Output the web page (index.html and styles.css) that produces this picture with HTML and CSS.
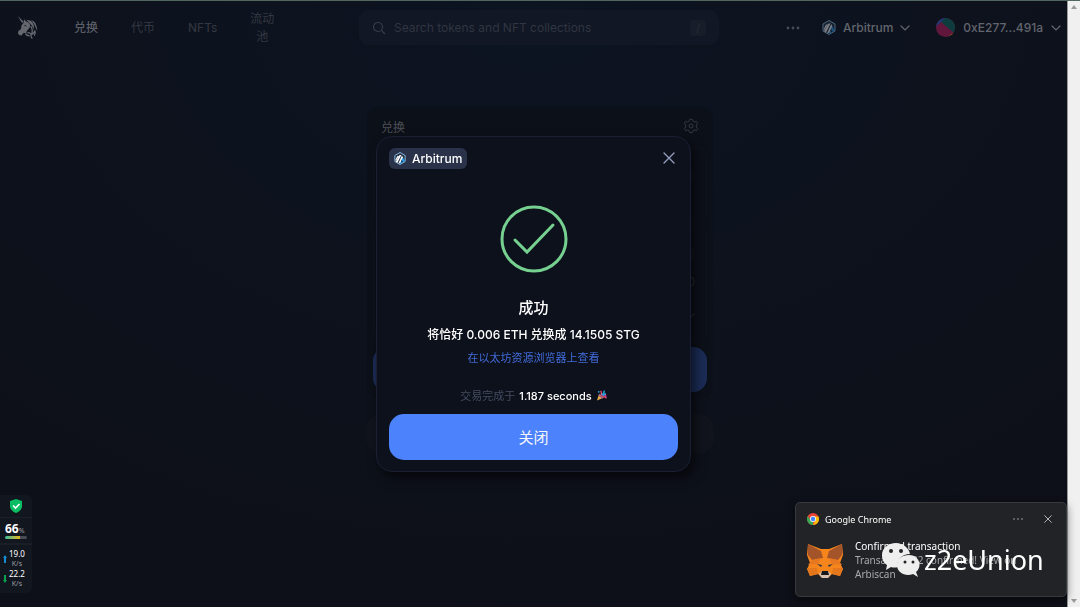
FILE: index.html
```html
<!DOCTYPE html>
<html lang="zh-CN">
<head>
  <meta charset="UTF-8" />
  <meta name="viewport" content="width=device-width, initial-scale=1.0"/>
  <title>Uniswap</title>
  <link rel="stylesheet" href="styles.css">
</head>
<body>

  <!-- shared icons -->
  <svg class="sprite" aria-hidden="true">
    <symbol id="arbitrum" viewBox="0 0 28 30">
      <path d="M14 1 L26 8 V22 L14 29 L2 22 V8 Z" fill="#213147" stroke="#9dcced" stroke-width="2"/>
      <path d="M17 16 L19.500 11 L25 20 V22 L21.500 24 Z M15 19 L12.500 24 L14.500 27 L19 25.500 Z" fill="#28a0f0"/>
      <path d="M13 7 H17 L8 25 L4 22.500 Z" fill="#fff"/>
      <path d="M18.500 8 L20.500 12 L14 26 L10.500 26 Z" fill="#fff"/>
      <path d="M8 9 H12 L4 21 V17 Z" fill="#fff"/>
    </symbol>
    <symbol id="chevron" viewBox="0 0 10 6">
      <path d="M1 1 L5 5 L9 1" fill="none" stroke="currentColor" stroke-width="1.200" stroke-linecap="round"/>
    </symbol>
    <symbol id="close" viewBox="0 0 12 12">
      <path d="M1 1 L11 11 M11 1 L1 11" fill="none" stroke="currentColor" stroke-width="1.300" stroke-linecap="round"/>
    </symbol>
  </svg>

  <div class="app">
    <header>
      <nav>
        <a href="#" class="logo" aria-label="Uniswap">
          <svg viewBox="0 0 66 76" width="22" height="25">
            <path d="M2 3 L19 20 L15 24 Z" fill="currentColor"/>
            <path d="M19 24 L21 13 L27 20 Q36 21 39 29 Q41 37 34 43 Q27 48 28 56 L20 54 L13 62 Q6 63 3 57 L3 50 L12 42 L13 32 Z" fill="currentColor"/>
            <path d="M28 15 Q42 14 48 25 Q53 33 51 44 Q46 31 37 24 Q33 19 28 15 Z" fill="currentColor"/>
            <path d="M43 16 Q56 20 58 32 Q61 37 61 48 Q55 36 52 29 Q48 21 43 16 Z" fill="currentColor"/>
            <path d="M41 34 Q49 45 44 59 Q51 56 54 49 Q57 55 52 63 M31 55 Q39 51 42 59 Q41 66 46 72 M25 58 Q31 64 38 63" fill="none" stroke="currentColor" stroke-width="4"/>
            <path d="M22 33 Q26 30 28 34" fill="none" stroke="#10131f" stroke-width="3"/>
          </svg>
        </a>
        <a href="#" class="active">兑换</a>
        <a href="#">代币</a>
        <a href="#">NFTs</a>
        <a href="#" class="pool">流动池</a>
      </nav>

      <div class="search-box">
        <svg viewBox="0 0 14 14" width="14" height="14"><circle cx="6" cy="6" r="4.500"/><path d="M9.500 9.500 L13 13"/></svg>
        <input type="text" aria-label="Search" placeholder="Search tokens and NFT collections">
        <kbd>/</kbd>
      </div>

      <div class="account">
        <button class="more" aria-label="More">
          <svg viewBox="0 0 14 4" width="14" height="4"><circle cx="2" cy="2" r="1.400"/><circle cx="7" cy="2" r="1.400"/><circle cx="12" cy="2" r="1.400"/></svg>
        </button>
        <button>
          <svg width="14" height="15"><use href="#arbitrum"/></svg>
          Arbitrum
          <svg width="10" height="6"><use href="#chevron"/></svg>
        </button>
        <button class="wallet">
          <svg viewBox="0 0 18 18" width="19" height="19">
            <clipPath id="round"><circle cx="9" cy="9" r="9"/></clipPath>
            <g clip-path="url(#round)">
              <rect width="18" height="18" fill="#c71f63"/>
              <path d="M8 0 L4 3 L18 15 V0 Z" fill="#0b7068"/>
              <path d="M0 0 H9 L0 8 Z" fill="#3265d6"/>
              <path d="M11 18 L16 14 L18 18 Z" fill="#f3a21b"/>
            </g>
          </svg>
          0xE277...491a
          <svg width="10" height="6"><use href="#chevron"/></svg>
        </button>
      </div>
    </header>

    <main>
      <div class="swap">
        <div class="swap-title">
          <span>兑换</span>
          <svg class="gear" viewBox="0 0 24 24" width="16" height="16">
            <circle cx="12" cy="12" r="3"/>
            <path d="M10 2 H14 L15 5 L17 6 L20 5 L22 8 L20 10.500 V13.500 L22 16 L20 19 L17 18 L15 19 L14 22 H10 L9 19 L7 18 L4 19 L2 16 L4 13.500 V10.500 L2 8 L4 5 L7 6 L9 5 Z"/>
          </svg>
        </div>
        <div class="panel"><span class="token"></span></div>
        <div class="panel tall">
          <span class="token"></span>
          <span>0</span>
          <svg width="10" height="6"><use href="#chevron"/></svg>
        </div>
        <div class="swap-button"></div>
      </div>
      <div class="promo"></div>
    </main>
  </div>

  <div class="scrollbar">
    <svg viewBox="0 0 6 4" width="6" height="4"><path d="M3 0 L6 4 H0 Z"/></svg>
    <svg viewBox="0 0 6 4" width="6" height="4"><path d="M0 0 H6 L3 4 Z"/></svg>
  </div>

  <div class="overlay">
    <div class="modal" role="dialog" aria-label="成功">
      <div class="modal-top">
        <span class="chain"><svg width="12" height="13"><use href="#arbitrum"/></svg>Arbitrum</span>
        <button class="close" aria-label="Close"><svg width="12" height="12"><use href="#close"/></svg></button>
      </div>
      <svg class="check" viewBox="0 0 68 68" width="68" height="68">
        <circle cx="34" cy="34" r="32"/>
        <path d="M15 35 L27 47 L53 20"/>
      </svg>
      <h2>成功</h2>
      <p class="summary">将恰好 0.006 ETH 兑换成 14.1505 STG</p>
      <a href="#" class="explorer">在以太坊资源浏览器上查看</a>
      <p class="time">交易完成于 <b>1.187 seconds</b>
        <svg viewBox="0 0 24 24" width="11" height="11">
          <path d="M7 8 L16 17 L2 23 Z" fill="#e9ad4c"/>
          <path d="M7 8 L16 17 L13 19 L5 12 Z" fill="#985f88"/>
          <path d="M10 12 Q14 8 10 2 M13 14 Q15 9 22 10 M15 16 Q19 13 23 18" fill="none" stroke="#f04769" stroke-width="3"/>
          <path d="M12 10 Q18 8 18 1 M15 13 L21 7" fill="none" stroke="#20a8df" stroke-width="3"/>
          <circle cx="6" cy="4" r="2" fill="#20a8df"/><circle cx="21" cy="13" r="2" fill="#ce45b4"/>
        </svg>
      </p>
      <button class="done">关闭</button>
    </div>
  </div>

  <aside class="monitor">
    <div class="shield">
      <svg viewBox="0 0 12 14" width="12" height="14">
        <path d="M6 0 L12 2 V8 Q11 12 6 14 Q1 12 0 8 V2 Z" fill="#08bd62"/>
        <path d="M3 6.500 L5.500 9 L9.500 5" fill="none" stroke="#fff" stroke-width="1.600"/>
      </svg>
    </div>
    <div class="memory"><b>66</b><small>%</small><div class="meter"></div></div>
    <div class="speed">
      <svg viewBox="0 0 4 8" width="4" height="8"><path d="M2 0 L4 3 H3 V8 H1 V3 H0 Z" fill="#168bd2"/></svg>
      <div>19.0<small>K/s</small></div>
    </div>
    <div class="speed">
      <svg viewBox="0 0 4 8" width="4" height="8"><path d="M2 8 L4 5 H3 V0 H1 V5 H0 Z" fill="#0aa24e"/></svg>
      <div>22.2<small>K/s</small></div>
    </div>
  </aside>

  <section class="toast">
    <div class="toast-top">
      <svg viewBox="0 0 24 24" width="12" height="12">
        <circle cx="12" cy="12" r="12" fill="#ea4335"/>
        <path d="M1.600 6 L7 15 L12 17 L12 24 A12 12 0 0 1 1.600 6" fill="#34a853"/>
        <path d="M12 7 H22.900 A12 12 0 0 1 12 24 L17 15 Z" fill="#fbbc05"/>
        <circle cx="12" cy="12" r="6" fill="#fff"/><circle cx="12" cy="12" r="4.500" fill="#4285f4"/>
      </svg>
      <span>Google Chrome</span>
      <button aria-label="Options"><svg viewBox="0 0 10 2" width="10" height="2" fill="currentColor"><circle cx="1" cy="1" r=".7"/><circle cx="5" cy="1" r=".7"/><circle cx="9" cy="1" r=".7"/></svg></button>
      <button aria-label="Dismiss"><svg width="8" height="8"><use href="#close"/></svg></button>
    </div>
    <div class="toast-body">
      <svg viewBox="0 0 36 35" width="36" height="35">
        <path d="M1 1 L14 6 H22 L35 1 L36 12 L33 20 L36 26 L33 33 L25 31 L21 35 H15 L11 31 L3 33 L0 26 L3 20 L0 12 Z" fill="#f6851b"/>
        <path d="M1 1 L14 8 L16 15 L5 17 L1 12 Z M35 1 L22 8 L20 15 L31 17 L35 12 Z" fill="#a45429"/>
        <path d="M5 17 L14 15 L11 21 L1 22 Z M31 17 L22 15 L25 21 L35 22 Z" fill="#e87820"/>
        <path d="M0 25 H10 L11 31 L3 33 Z M36 25 H26 L25 31 L33 33 Z" fill="#e4761b"/>
        <path d="M10 21 L15 22 L14 24 Z M26 21 L21 22 L22 24 Z" fill="#293643"/>
        <path d="M12 31 L15 28 H21 L24 31 L21 35 H15 Z" fill="#d7c1b3"/>
        <path d="M15 28 H21 L22 32 H14 Z" fill="#17191b"/>
      </svg>
      <div>
        <strong>Confirmed transaction</strong>
        <p>Transaction 32 confirmed! View on Arbiscan</p>
      </div>
    </div>
    <div class="watermark">
      <svg viewBox="0 0 38 34" width="38" height="34">
        <path d="M14 0 C6 0 0 5 0 12 C0 17 2 20 5 22 L4 27 L9 24 Q12 25 16 24 C14 17 20 11 28 11 C27 5 21 0 14 0 Z" fill="#eee"/>
        <path d="M27 12 C20 12 15 16 15 22 C15 30 24 34 31 31 L36 34 L34 29 C41 23 37 12 27 12 Z" fill="#eee"/>
        <g fill="#222326"><circle cx="9" cy="8" r="2"/><circle cx="19" cy="8" r="2"/><circle cx="23" cy="19" r="1.500"/><circle cx="31" cy="19" r="1.500"/></g>
      </svg>
      <span>z2eUnion</span>
    </div>
  </section>

</body>
</html>
```
FILE: styles.css
```css
* {
  box-sizing: border-box;
}

body {
  display: flex;
  min-height: 100vh;
  margin: 0;
  border-top: 1px solid #50665f;
  background-color: #0d1018;
  color: #fff;
  font-family: Inter, "Noto Sans CJK SC", sans-serif;
  font-size: 12px;
}

a {
  color: inherit;
  text-decoration: none;
}

button {
  padding: 0;
  border: none;
  background: none;
  color: inherit;
  font: inherit;
  cursor: pointer;
}

h2, p {
  margin: 0;
}

svg {
  flex: none;
}

.sprite {
  position: absolute;
  width: 0;
  height: 0;
}

.app {
  flex: 1;
  padding-left: 13px;
  background: radial-gradient(ellipse 80% 100% at 50% 0, #0c1421 0%, #0d121d 50%, #0d1018 100%);
}

/* Top bar */
header {
  display: flex;
  align-items: center;
  height: 53px;
}

nav, .account {
  flex: 1;
  display: flex;
  align-items: center;
}

nav {
  gap: 33px;
  padding-left: 4px;
  color: #343842;
}

nav a {
  line-height: 18px;
}

nav .active {
  color: #5b5e66;
  font-weight: 500;
}

.logo {
  display: flex;
  margin-right: 2px;
  color: #65676f;
}

.pool {
  width: 24px;
  text-align: center;
}

.search-box {
  display: flex;
  align-items: center;
  gap: 8px;
  width: 360px;
  height: 35px;
  padding: 0 12px;
  border: 1px solid #131825;
  border-radius: 10px;
  background-color: #111724;
}

.search-box svg {
  fill: none;
  stroke: #363c48;
  stroke-width: 1.2;
}

.search-box input {
  flex: 1;
  min-width: 0;
  padding: 0;
  border: none;
  outline: none;
  background: none;
  color: #fff;
  font: inherit;
}

.search-box input::placeholder {
  color: #303541;
}

kbd {
  width: 16px;
  border-radius: 4px;
  background-color: #181d2a;
  color: #2b303c;
  font: 10px/16px Inter, sans-serif;
  text-align: center;
}

.account {
  justify-content: flex-end;
  gap: 26px;
  padding-right: 6px;
  color: #62656d;
  font-weight: 500;
}

.account button {
  display: flex;
  align-items: center;
  gap: 8px;
}

.account button:nth-child(2) {
  gap: 7px;
}

.account button > svg:first-child {
  opacity: 0.45;
}

.account .more > svg:first-child {
  margin-right: -4px;
  fill: currentColor;
  opacity: 0.7;
}

/* Swap form behind the dialog */
main {
  display: flex;
  flex-direction: column;
  align-items: center;
  gap: 16px;
  padding-top: 53px;
}

.swap {
  width: 346px;
  padding: 6px;
  border-radius: 12px;
  background-color: #0c1018;
}

.swap-title {
  display: flex;
  justify-content: space-between;
  align-items: center;
  height: 26px;
  margin-bottom: 8px;
  padding: 0 8px;
  color: #4c4e55;
}

.gear {
  fill: none;
  stroke: #343843;
  stroke-width: 1.5;
}

.panel {
  display: flex;
  flex-direction: column;
  align-items: flex-end;
  gap: 10px;
  height: 76px;
  margin-bottom: 2px;
  padding: 18px 11px;
  border: 1px solid #10141e;
  border-radius: 10px;
  color: #262a34;
}

.panel.tall {
  height: 118px;
  margin-bottom: 4px;
}

.panel svg {
  margin-top: 14px;
}

.token {
  flex: none;
  width: 70px;
  height: 20px;
  border-radius: 10px;
  background-color: #10141d;
}

.swap-button {
  height: 45px;
  border-radius: 14px;
  background-color: #1b2c56;
}

.promo {
  width: 348px;
  height: 40px;
  border-radius: 16px;
  background-color: #11141d;
}

.scrollbar {
  display: flex;
  flex-direction: column;
  justify-content: space-between;
  align-items: center;
  width: 13px;
  padding: 4px 0;
  border-left: 1px solid #999;
  background-color: #f0f0f0;
  fill: #999;
}

/* Transaction dialog */
.overlay {
  position: fixed;
  inset: 0 13px 0 0;
  display: grid;
  place-items: center;
}

.modal {
  display: flex;
  flex-direction: column;
  align-items: center;
  width: 315px;
  padding: 11px 12px;
  border: 1px solid #192033;
  border-radius: 16px;
  background-color: #0d111c;
  box-shadow: 4px 6px 12px rgba(0,0,0,0.6);
}

.modal-top {
  display: flex;
  justify-content: space-between;
  align-items: center;
  width: 100%;
  margin-bottom: 36px;
}

.chain {
  display: flex;
  align-items: center;
  gap: 6px;
  padding: 0 5px;
  border-radius: 6px;
  background-color: #293249;
  font-weight: 500;
  line-height: 21px;
}

.close {
  display: flex;
  padding: 3px;
  color: #98a1c0;
}

.check {
  margin-bottom: 24px;
  fill: none;
  stroke: #76d191;
  stroke-width: 3;
  stroke-linecap: round;
}

h2 {
  margin-bottom: 6px;
  font-size: 15px;
  font-weight: 500;
  line-height: 22px;
}

.summary {
  margin-bottom: 5px;
  font-weight: 500;
  line-height: 20px;
}

.explorer {
  margin-bottom: 22px;
  color: #426cdb;
  font-size: 11px;
  line-height: 16px;
}

.time {
  display: flex;
  align-items: center;
  gap: 4px;
  margin-bottom: 10px;
  color: #454c61;
  font-size: 11px;
  line-height: 16px;
}

.time b {
  color: #fff;
  font-weight: 500;
}

.done {
  width: 100%;
  height: 46px;
  border-radius: 15px;
  background-color: #4c82fb;
  color: #f5f6fc;
  font-size: 15px;
}

/* Desktop widget */
.monitor {
  position: fixed;
  left: 0;
  bottom: 14px;
  width: 32px;
  padding-bottom: 4px;
  border-radius: 0 6px 6px 0;
  background-color: #12161f;
  font-family: "Noto Sans", sans-serif;
  font-size: 8px;
  line-height: 10px;
}

.monitor small {
  color: #999ca3;
  font-size: 7px;
}

.shield {
  display: flex;
  justify-content: center;
  padding: 4px 0;
  border-bottom: 1px solid #1c202a;
}

.memory {
  margin-bottom: 4px;
  padding: 4px 5px;
  border-bottom: 2px solid #1a1e27;
}

.memory b {
  font-size: 12px;
  line-height: 13px;
}

.meter {
  height: 3px;
  border-radius: 2px;
  background: linear-gradient(90deg, #3abca0, #e3b520 66%, #484b52 66%);
}

.speed {
  display: flex;
  align-items: center;
  gap: 2px;
  padding-left: 3px;
}

.speed small {
  display: block;
  text-align: center;
}

/* Notification */
.toast {
  position: fixed;
  right: 13px;
  bottom: 10px;
  width: 272px;
  height: 95px;
  padding: 10px 11px;
  border: 1px solid #38393d;
  border-radius: 5px;
  background-color: #222326;
  box-shadow: 0 3px 8px rgba(0,0,0,0.5);
  font-family: "Noto Sans", sans-serif;
}

.toast-top {
  display: flex;
  align-items: center;
  gap: 6px;
  height: 12px;
  margin-bottom: 14px;
  font-size: 9px;
}

.toast-top span {
  flex: 1;
}

.toast-top button {
  display: flex;
  margin-right: 3px;
  color: #c8c8c8;
}

.toast-top button + button {
  margin-left: 12px;
}

.toast-body {
  display: flex;
  align-items: center;
  gap: 12px;
  font-size: 10px;
  line-height: 14px;
}

.toast-body > div {
  width: 170px;
}

.toast-body strong {
  display: block;
  font-weight: 400;
}

.toast-body p {
  color: #a9aaac;
}

.watermark {
  position: absolute;
  top: 37px;
  left: 86px;
  display: flex;
  align-items: center;
  gap: 4px;
  font-size: 27px;
  line-height: 40px;
}
```
